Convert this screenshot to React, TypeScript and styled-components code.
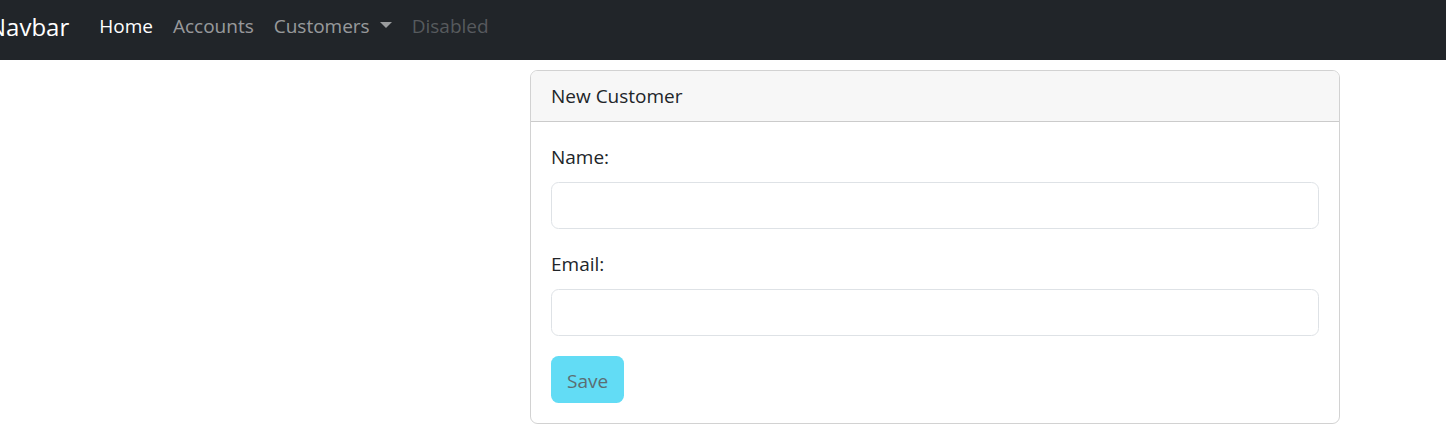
import styled, { createGlobalStyle } from "styled-components";

const GlobalStyle = createGlobalStyle`
  html, body {
    margin: 0;
    padding: 0;
    background: #ffffff;
  }
  body {
    font-family: "Open Sans", "Noto Sans", sans-serif;
    font-size: 19px;
    line-height: 30px;
    color: #212529;
  }
  * {
    box-sizing: border-box;
  }
`;

const Navbar = styled.nav`
  display: flex;
  align-items: center;
  height: 60px;
  padding-bottom: 8px;
  background-color: #212529;
  overflow: hidden;
`;

const Brand = styled.a`
  margin-left: -12px;
  margin-right: 20px;
  font-size: 24px;
  line-height: 37px;
  color: #ffffff;
  text-decoration: none;
  white-space: nowrap;
`;

const NavList = styled.ul`
  display: flex;
  margin: 0;
  padding: 0;
  list-style: none;
`;

const NavLink = styled.a<{ $state?: "active" | "disabled" }>`
  display: flex;
  align-items: center;
  padding: 10px;
  text-decoration: none;
  color: ${(p) =>
    p.$state === "active"
      ? "#ffffff"
      : p.$state === "disabled"
      ? "rgba(255, 255, 255, 0.25)"
      : "rgba(255, 255, 255, 0.55)"};
`;

const Caret = styled.span`
  display: inline-block;
  margin-left: 10px;
  margin-top: -2px;
  border-top: 6px solid currentColor;
  border-left: 6px solid transparent;
  border-right: 6px solid transparent;
`;

const Main = styled.main`
  display: grid;
  grid-template-columns: 530px 810px;
  padding-top: 10px;
`;

const Card = styled.section`
  grid-column: 2;
  border: 1px solid rgba(0, 0, 0, 0.175);
  border-radius: 7.5px;
  overflow: hidden;
`;

const CardHeader = styled.header`
  padding: 10px 20px;
  background-color: #f7f7f7;
  border-bottom: 1px solid rgba(0, 0, 0, 0.175);
`;

const CardBody = styled.form`
  display: flex;
  flex-direction: column;
  padding: 20px;
`;

const Field = styled.div`
  margin-bottom: 20px;
`;

const Label = styled.label`
  display: block;
  margin-bottom: 10px;
`;

const Input = styled.input`
  display: block;
  width: 100%;
  height: 47px;
  padding: 7.5px 15px;
  font: inherit;
  border: 1px solid #dee2e6;
  border-radius: 7.5px;
  background: #ffffff;
  outline: none;
`;

const Button = styled.button`
  align-self: flex-start;
  height: 47px;
  padding: 2px 16px 0;
  font: inherit;
  color: #5c6d72;
  background-color: #62dcf5;
  border: none;
  border-radius: 7.5px;
`;

export default function App() {
  return (
    <>
      <GlobalStyle />
      <Navbar>
        <Brand href="#">Navbar</Brand>
        <NavList>
          <li>
            <NavLink href="#" $state="active">Home</NavLink>
          </li>
          <li>
            <NavLink href="#">Accounts</NavLink>
          </li>
          <li>
            <NavLink href="#">
              Customers
              <Caret />
            </NavLink>
          </li>
          <li>
            <NavLink $state="disabled">Disabled</NavLink>
          </li>
        </NavList>
      </Navbar>
      <Main>
        <Card>
          <CardHeader>New Customer</CardHeader>
          <CardBody onSubmit={(e) => e.preventDefault()}>
            <Field>
              <Label htmlFor="name">Name:</Label>
              <Input id="name" type="text" />
            </Field>
            <Field>
              <Label htmlFor="email">Email:</Label>
              <Input id="email" type="email" />
            </Field>
            <Button type="submit" disabled>
              Save
            </Button>
          </CardBody>
        </Card>
      </Main>
    </>
  );
}
